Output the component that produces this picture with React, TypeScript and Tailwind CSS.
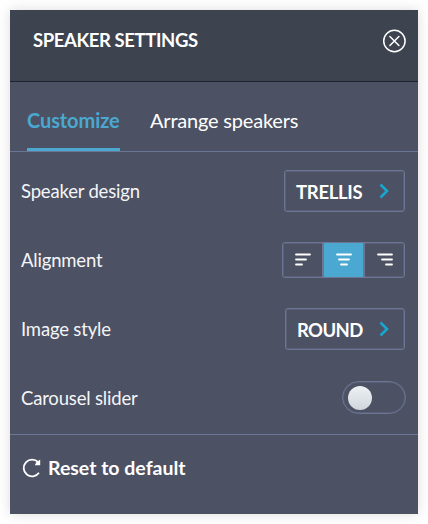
import { JSX, ReactNode, useState } from 'react';

type Align = 'left' | 'center' | 'right';

const ALIGN_LINES: Record<Align, string> = {
  left: 'M1 1.5h14M1 6.5h10M1 11.5h6',
  center: 'M1 1.5h14M3 6.5h10M5 11.5h6',
  right: 'M1 1.5h14M5 6.5h10M9 11.5h6',
};

const AlignIcon = ({ align }: { align: Align }): JSX.Element => (
  <svg className="mb-px h-[13px] w-4" viewBox="0 0 16 13" fill="none" stroke="currentColor" strokeWidth={1.8} strokeLinecap="round">
    <path d={ALIGN_LINES[align]} />
  </svg>
);

const Row = ({ label, children }: { label: string; children: ReactNode }): JSX.Element => (
  <div className="flex h-[42px] items-center justify-between">
    <span className="text-[18.5px] leading-6 tracking-[-0.18px] text-[#f4f5f7]">{label}</span>
    {children}
  </div>
);

const SelectButton = ({ value, className }: { value: string; className: string }): JSX.Element => (
  <button className={`flex h-[42px] items-center justify-between rounded-[3px] border border-[#6b7694] pr-[15px] pl-[11px] text-[18.5px] font-bold shadow-[inset_0_0_0_1px_rgba(107,118,148,0.4)] ${className}`}>
    <span className="pt-px leading-6">{value}</span>
    <svg className="h-4 w-[10px] text-[#14a9d2]" viewBox="0 0 10 16" fill="none" stroke="currentColor" strokeWidth={2.5}>
      <path d="M1.5 1.5L8 8l-6.5 6.5" />
    </svg>
  </button>
);

export const SpeakerSettings = (): JSX.Element => {
  const [align, setAlign] = useState<Align>('center');
  const [carousel, setCarousel] = useState(false);

  return (
    <div className="h-[524px] w-[428px] bg-white p-[10px] font-['Lato',sans-serif] text-white">
      <div className="flex h-[504px] w-[408px] flex-col bg-[#4c5163] shadow-[0_0_12px_rgba(0,0,0,0.14)]">
        <header className="flex h-[72px] items-start justify-between border-b border-[#1d2430] bg-[#3d434f] pt-[18px] pr-3 pl-[23px]">
          <h1 className="text-[18.5px] leading-6 font-bold tracking-[-0.4px]">SPEAKER SETTINGS</h1>
          <button aria-label="Close" className="mt-[1px]">
            <svg className="h-6 w-6" viewBox="0 0 24 24" fill="none" stroke="currentColor" strokeWidth={1.5}>
              <circle cx="12.4" cy="12" r="10.7" />
              <path d="M7.9 7.5l9 9M16.9 7.5l-9 9" strokeLinecap="round" />
            </svg>
          </button>
        </header>

        <nav className="flex h-[70px] items-end gap-[30px] border-b border-[#6b7694] pl-[17px] text-[20px] leading-6">
          <button className="h-[43px] w-[93px] border-b-[3px] border-[#4aa8d1] pb-4 text-left font-bold tracking-[-0.1px] text-[#4aa8d1]">Customize</button>
          <button className="h-[43px] pb-[19px] tracking-[-0.2px]">Arrange speakers</button>
        </nav>

        <section className="flex flex-col gap-[27px] border-b border-[#6b7694] pt-[18px] pr-[13px] pb-[15px] pl-[11px]">
          <Row label="Speaker design">
            <SelectButton value="TRELLIS" className="w-[121px] tracking-[-0.3px]" />
          </Row>
          <Row label="Alignment">
            <div className="flex h-9 w-[123px] divide-x-2 divide-[#6b7694] overflow-hidden rounded-[3px] border border-[#6b7694] shadow-[inset_0_0_0_1px_rgba(107,118,148,0.4)]">
              {(['left', 'center', 'right'] as Align[]).map((a) => (
                <button
                  key={a}
                  aria-label={`Align ${a}`}
                  onClick={() => setAlign(a)}
                  className={`flex flex-1 items-center justify-center ${a === align ? 'bg-[#4aa8d1]' : ''}`}
                >
                  <AlignIcon align={a} />
                </button>
              ))}
            </div>
          </Row>
          <Row label="Image style">
            <SelectButton value="ROUND" className="w-[120px] tracking-[-0.6px]" />
          </Row>
          <Row label="Carousel slider">
            <button
              role="switch"
              aria-checked={carousel}
              aria-label="Carousel slider"
              onClick={() => setCarousel(!carousel)}
              className={`-mt-px -mr-px flex h-[33px] w-16 items-center rounded-full border border-[#6b7694] px-[5px] shadow-[inset_0_0_0_1px_rgba(107,118,148,0.4)] ${carousel ? 'justify-end' : ''}`}
            >
              <span className="h-6 w-6 rounded-full bg-linear-to-b from-[#eef1f4] to-[#cfd6dc]" />
            </button>
          </Row>
        </section>

        <button className="flex items-center gap-[6px] pt-[21px] pl-3 text-[19.5px] leading-6 font-bold">
          <svg className="h-5 w-5" viewBox="0 0 20 20" fill="none" stroke="currentColor" strokeWidth={1.8}>
            <path d="M17 14.8A8.4 8.4 0 1 1 16.2 4.2" />
            <path d="M18.2 1.4v5.9h-5.4l1.6-3.1z" fill="currentColor" stroke="none" />
          </svg>
          Reset to default
        </button>
      </div>
    </div>
  );
};

export default SpeakerSettings;
